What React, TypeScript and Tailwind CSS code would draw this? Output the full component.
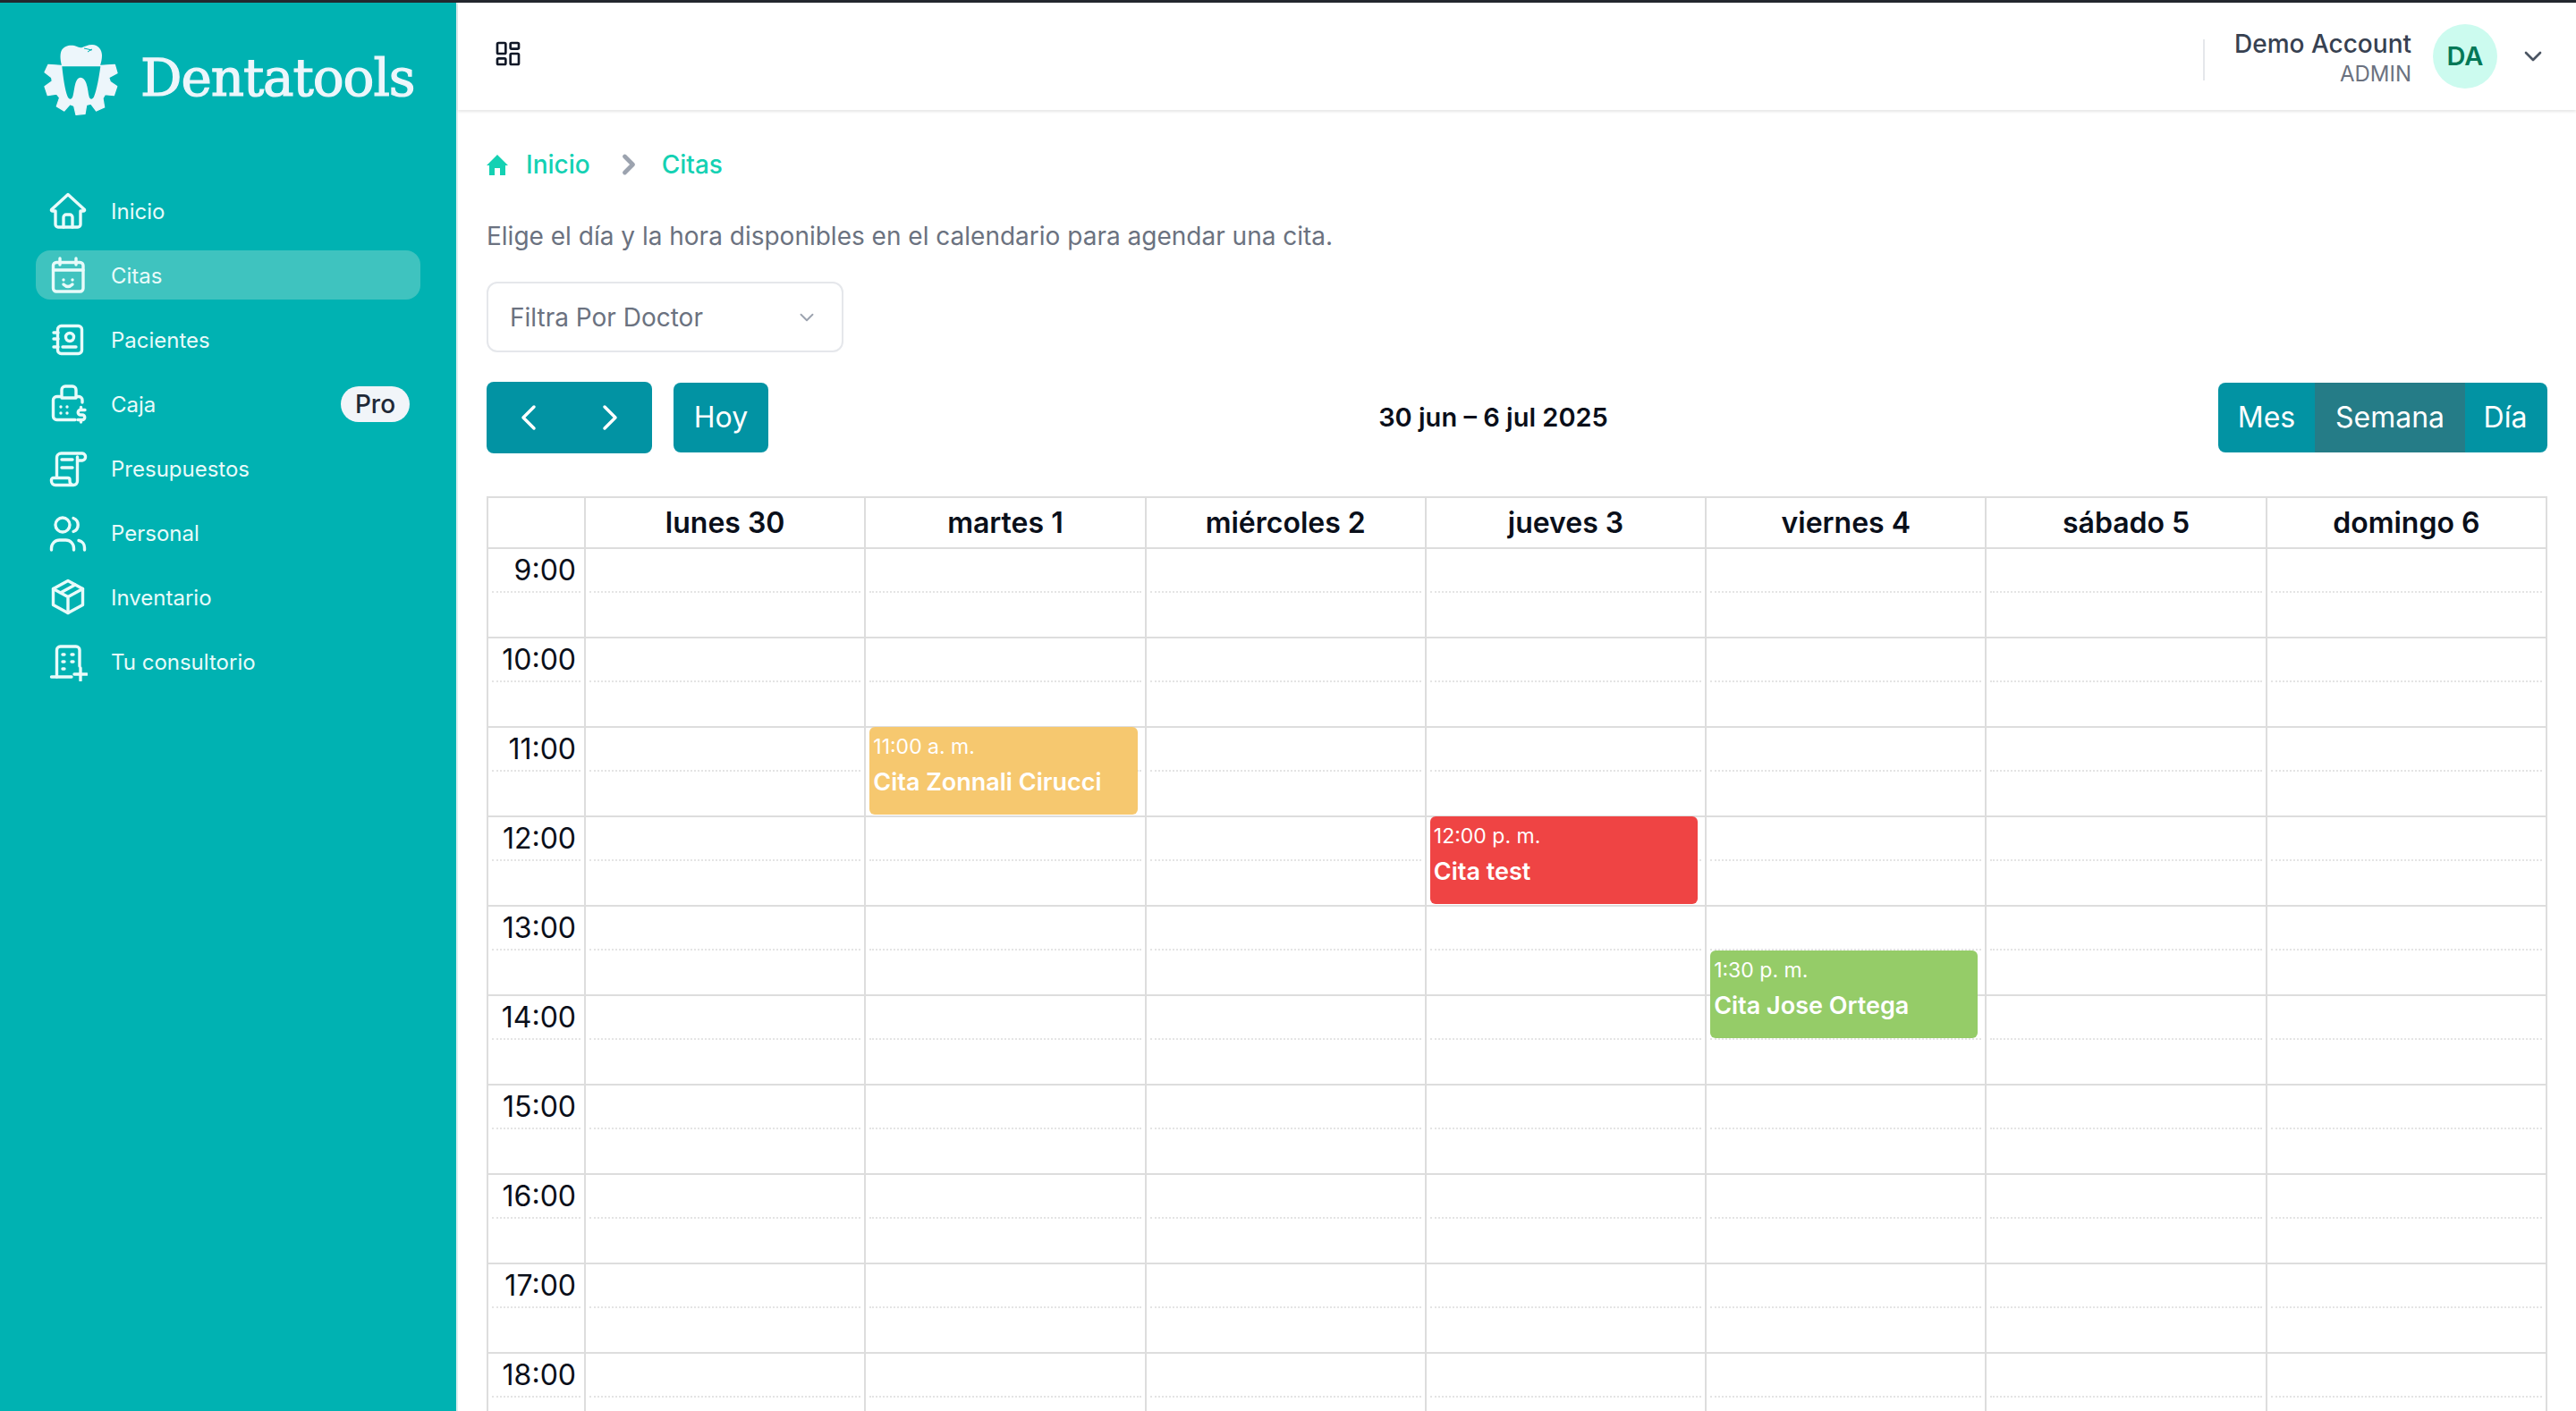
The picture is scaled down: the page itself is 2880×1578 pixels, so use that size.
import React from 'react';
import { ChevronDown, ChevronLeft, ChevronRight, LayoutDashboard } from 'lucide-react';

const iconProps = {
  width: 44,
  height: 44,
  viewBox: '0 0 44 44',
  fill: 'none',
  stroke: 'currentColor',
  strokeWidth: 3.4,
  strokeLinecap: 'round' as const,
  strokeLinejoin: 'round' as const,
  className: 'shrink-0',
};

const HomeIcon = () => (
  <svg {...iconProps}>
    <path d="M22 3.5 3.5 20.5Q3 22 5 22H8V37a3 3 0 0 0 3 3H33a3 3 0 0 0 3-3V22H39Q41 22 40.5 20.5Z" />
    <path d="M17 40V29a3 3 0 0 1 3-3h4a3 3 0 0 1 3 3V40" />
  </svg>
);

const CalendarIcon = () => (
  <svg {...iconProps}>
    <rect x="5.5" y="7.5" width="33.5" height="32.5" rx="3.5" />
    <path d="M13 3v7M31 3v7M5.5 16H39M17 27h.01M27 27h.01M17 32q5 5 10 0" />
  </svg>
);

const ContactsIcon = () => (
  <svg {...iconProps}>
    <rect x="10.5" y="6.5" width="27" height="31" rx="4" />
    <circle cx="24" cy="19" r="4.5" />
    <path d="M16 30h15M6 14h5M6 21h5M6 30h5" />
  </svg>
);

const RegisterIcon = () => (
  <svg {...iconProps}>
    <path d="M13 13.5H9.5a4 4 0 0 0-4 4V35.5a4 4 0 0 0 4 4H30" />
    <path d="M32.5 13.5H34a4 4 0 0 1 4 4V20" />
    <path d="M15 14.5V6a4 4 0 0 1 4-4h8a4 4 0 0 1 4 4v9H15" />
    <path d="M14 25h.01M21 25h.01M14 32h.01M21 32h.01" />
    <path d="M41 28.5h-5a2.5 2.5 0 0 0 0 5.5h2a2.5 2.5 0 0 1 0 5.5h-5M36.5 25.5v2.5M36.5 40v2" />
  </svg>
);

const ScrollIcon = () => (
  <svg {...iconProps}>
    <path d="M9.5 31V10a5 5 0 0 1 5-5H38a3.7 3.7 0 0 1 3.5 4 3.7 3.7 0 0 1-3.5 4h-5.5" />
    <path d="M32.5 9V36a4.5 4.5 0 0 1-4.5 4.5H8A4.5 4.5 0 0 1 3.5 36v-1.5a2 2 0 0 1 2-2H22a2 2 0 0 1 2 2v1a4.5 4.5 0 0 0 4 5" />
    <path d="M15 12h12M15 21h12" />
  </svg>
);

const UsersIcon = () => (
  <svg {...iconProps}>
    <circle cx="16" cy="13" r="8" />
    <path d="M28 5.5a8 8 0 0 1 0 15" />
    <path d="M3.5 41v-2a9 9 0 0 1 9-9h7a9 9 0 0 1 9 9v2" />
    <path d="M34 30.5a8 8 0 0 1 6.5 8V41" />
  </svg>
);

const BoxIcon = () => (
  <svg {...iconProps}>
    <path d="M22 3.5 38.5 12.5V30.5L22 39.5 5.5 30.5V12.5Z" />
    <path d="M5.5 12.5 22 21.5 38.5 12.5M22 21.5V39.5M13.5 17 30 8" />
  </svg>
);

const BuildingIcon = () => (
  <svg {...iconProps}>
    <path d="M9.5 39V9a4 4 0 0 1 4-4H31a4 4 0 0 1 4 4V27" />
    <path d="M3.5 39H26M36 29V43M29 36H43" />
    <path d="M16 14h2M26 14h2M16 22h2M26 22h2M16 30h2" />
  </svg>
);

const LogoMark = () => (
  <svg width="100" height="100" viewBox="0 0 300 300" className="shrink-0">
    <path
      fill="#edf6fb"
      stroke="#edf6fb"
      strokeWidth="4"
      strokeLinejoin="round"
      d="M218 100 265 97 273 125 245 140 250 155 272 170 262 200 232 197 225 210 230 240 203 252 185 228 170 232 165 262 135 265 128 235 115 230 95 252 70 237 80 208 70 195 40 200 30 170 55 152 53 140 30 122 42 97 85 100Z"
    />
    <path
      fill="#00b2b2"
      d="M88 103H217C212 140 205 180 195 205 190 215 180 215 178 200 175 185 172 140 150 140 130 140 130 185 125 200 122 215 112 215 107 205 97 180 92 140 88 103Z"
    />
    <path
      fill="#edf6fb"
      d="M87 100C81 78 81 60 87 48 96 33 114 30 129 33 141 36 147 42 156 39 165 36 174 30 189 30 210 30 222 48 222 66 222 78 219 90 216 100Z"
    />
    <path fill="none" stroke="#00b2b2" strokeWidth="3" d="M162 42 188 48M174 54 189 45" />
  </svg>
);

const navItems = [
  { label: 'Inicio', icon: <HomeIcon /> },
  { label: 'Citas', icon: <CalendarIcon />, active: true },
  { label: 'Pacientes', icon: <ContactsIcon /> },
  { label: 'Caja', icon: <RegisterIcon />, pro: true },
  { label: 'Presupuestos', icon: <ScrollIcon /> },
  { label: 'Personal', icon: <UsersIcon /> },
  { label: 'Inventario', icon: <BoxIcon /> },
  { label: 'Tu consultorio', icon: <BuildingIcon /> },
];

const days = ['lunes 30', 'martes 1', 'miércoles 2', 'jueves 3', 'viernes 4', 'sábado 5', 'domingo 6'];
const hours = ['9:00', '10:00', '11:00', '12:00', '13:00', '14:00', '15:00', '16:00', '17:00', '18:00'];

const events = [
  { day: 1, time: '11:00 a. m.', title: 'Cita Zonnali Cirucci', className: 'top-[199px] bg-[#f6c86f]' },
  { day: 3, time: '12:00 p. m.', title: 'Cita test', className: 'top-[299px] bg-[#ef4444]' },
  { day: 4, time: '1:30 p. m.', title: 'Cita Jose Ortega', className: 'top-[449px] bg-[#95cc68]' },
];

const Sidebar = () => (
  <aside className="w-[512px] shrink-0 bg-[#00b2b2] border-r-2 border-[#dfeef0] text-[#e8fbfa]">
    <div className="flex items-center h-[174px] pl-[40px] pb-[1px]">
      <LogoMark />
      <span className="ml-[17px] -mt-[5px] text-[58px] leading-none tracking-[-1.1px] text-[#edf6fb] font-['DejaVu_Serif',serif] [-webkit-text-stroke:1.2px_#edf6fb]">
        Dentatools
      </span>
    </div>
    <nav className="flex flex-col gap-[17px] mt-[31px] pl-[40px] pr-[40px]">
      {navItems.map(item => (
        <div
          key={item.label}
          className={`flex items-center h-[55px] rounded-[16px] pl-[14px] pr-[12px] ${item.active ? 'bg-[#3fc3bf]' : ''}`}
        >
          {item.icon}
          <span className="ml-[26px] mt-[2px] text-[24px]">{item.label}</span>
          {item.pro && (
            <span className="ml-auto flex items-center justify-center w-[77px] h-[40px] rounded-full bg-[#f1f5f9] text-[#1f2937] text-[28px] font-medium">
              Pro
            </span>
          )}
        </div>
      ))}
    </nav>
  </aside>
);

const Header = () => (
  <header className="flex items-center justify-between h-[120px] shrink-0 pl-[40px] pr-[32px] bg-white shadow-[0_2px_3px_rgba(0,0,0,0.1)] z-10">
    <LayoutDashboard size={32} strokeWidth={2} className="text-[#111827] -mt-[7px]" />
    <div className="flex items-center">
      <div className="w-[2px] h-[46px] bg-[#e5e7eb] mr-[33px] mt-[8px]" />
      <div className="flex flex-col items-end mt-[3px]">
        <span className="text-[28px] leading-[36px] font-medium text-[#374151]">Demo Account</span>
        <span className="text-[24px] leading-[32px] text-[#6b7280]">ADMIN</span>
      </div>
      <div className="flex items-center justify-center w-[72px] h-[72px] rounded-full ml-[24px] bg-[#ccfbef] text-[#047857] text-[29px] font-semibold">
        DA
      </div>
      <ChevronDown size={32} strokeWidth={2} className="ml-[24px] text-[#4b5563]" />
    </div>
  </header>
);

const Calendar = () => (
  <div className="border-2 border-b-0 border-[#ddd] mt-[48px] text-[#0a0f1a]">
    <div className="grid grid-cols-[107px_repeat(7,minmax(0,1fr))] h-[57px] border-b-2 border-[#ddd]">
      <div />
      {days.map(d => (
        <div key={d} className="flex items-center justify-center pt-[1px] border-l-2 border-[#ddd] text-[32px] font-semibold">
          {d}
        </div>
      ))}
    </div>
    <div className="grid grid-cols-[107px_repeat(7,minmax(0,1fr))]">
      <div>
        {hours.map(h => (
          <div key={h} className="relative h-[100px] border-b-2 border-[#ddd]">
            <div className="h-[49px] mx-[4px] border-b-2 border-dotted border-[#e4e4e4]" />
            <span className="absolute top-0 right-[9px] text-[32px] leading-[48px]">{h}</span>
          </div>
        ))}
      </div>
      {days.map((d, i) => (
        <div key={d} className="relative border-l-2 border-[#ddd]">
          {hours.map(h => (
            <div key={h} className="h-[100px] border-b-2 border-[#ddd]">
              <div className="h-[49px] mx-[4px] border-b-2 border-dotted border-[#e4e4e4]" />
            </div>
          ))}
          {events
            .filter(e => e.day === i)
            .map(e => (
              <div
                key={e.title}
                className={`absolute left-[4px] right-[8px] h-[98px] rounded-[6px] pl-[4px] pt-[8px] text-white ${e.className}`}
              >
                <div className="text-[23px] leading-[28px]">{e.time}</div>
                <div className="mt-[9px] text-[27px] leading-[34px] font-semibold">{e.title}</div>
              </div>
            ))}
        </div>
      ))}
    </div>
  </div>
);

export default function App() {
  return (
    <div className="flex flex-col h-screen overflow-hidden bg-white font-['Inter',sans-serif]">
      <div className="h-[3px] shrink-0 bg-[#23272e]" />
      <div className="flex flex-1 min-h-0">
        <Sidebar />
        <main className="flex flex-col flex-1 min-w-0">
          <Header />
          <div className="px-[32px]">
            <div className="flex items-center h-[40px] mt-[41px] text-[28px] font-medium text-[#14d1b3]">
              <svg width="24" height="24" viewBox="0 0 24 24" fill="currentColor" className="shrink-0">
                <path d="M12 1 24 13h-3v11h-6v-8H9v8H3V13H0Z" />
              </svg>
              <span className="ml-[20px]">Inicio</span>
              <ChevronRight size={36} strokeWidth={3.2} className="ml-[25px] text-[#9ca3af]" />
              <span className="ml-[19px]">Citas</span>
            </div>
            <p className="mt-[38px] text-[28px] leading-[44px] text-[#6b7280]">
              Elige el día y la hora disponibles en el calendario para agendar una cita.
            </p>
            <div className="flex items-center justify-between w-[399px] h-[79px] mt-[29px] pl-[24px] pr-[26px] rounded-[12px] border-2 border-[#e5e7eb] text-[28px] text-[#6b7280]">
              <span className="mt-[1px]">Filtra Por Doctor</span>
              <ChevronDown size={26} strokeWidth={1.75} className="text-[#9ca3af]" />
            </div>
            <div className="flex items-center justify-between h-[80px] mt-[33px]">
              <div className="flex items-center gap-[24px]">
                <div className="flex items-center justify-center gap-[43px] w-[185px] h-[80px] rounded-[8px] bg-[#0293a3] text-white">
                  <ChevronLeft size={48} strokeWidth={1.75} />
                  <ChevronRight size={48} strokeWidth={1.75} />
                </div>
                <div className="flex items-center justify-center w-[106px] h-[78px] rounded-[8px] bg-[#0293a3] text-white text-[32px]">
                  Hoy
                </div>
              </div>
              <div className="text-[29px] font-semibold text-[#0a0f1a]">30 jun – 6 jul 2025</div>
              <div className="flex h-[78px] rounded-[8px] overflow-hidden bg-[#0293a3] text-white text-[32px]">
                <div className="flex items-center justify-center w-[108px]">Mes</div>
                <div className="flex items-center justify-center w-[168px] bg-[#257c87]">Semana</div>
                <div className="flex items-center justify-center w-[92px] pr-[2px]">Día</div>
              </div>
            </div>
            <Calendar />
          </div>
        </main>
      </div>
    </div>
  );
}
